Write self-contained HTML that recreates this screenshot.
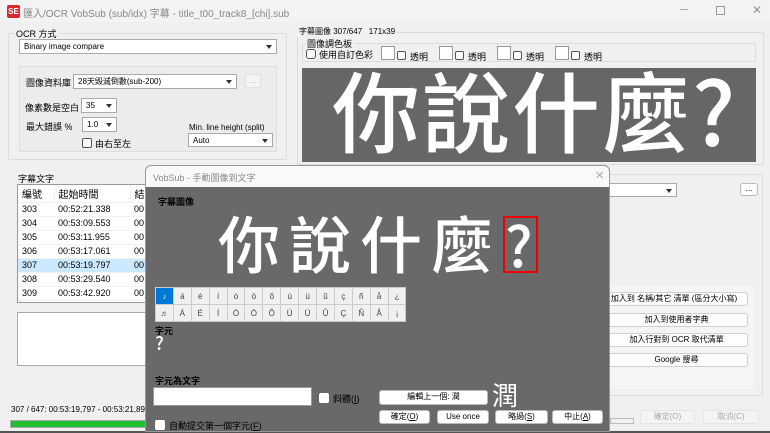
<!DOCTYPE html>
<html><head><meta charset="utf-8">
<style>
*{box-sizing:border-box;margin:0;padding:0}
body{width:770px;height:433px;overflow:hidden;background:#f0f0f0;font-family:"Liberation Sans","Noto Sans CJK TC",sans-serif;font-size:9px;color:#000;position:relative}
.a{position:absolute}
.grp{position:absolute;border:1px solid #dcdcdc;border-radius:2px}
.lbl{position:absolute;background:#f0f0f0;padding:0 2px;font-size:9px}
.combo{position:absolute;background:#fff;border:1px solid #aaa;font-size:8px;padding:2px 4px;line-height:10px}
.combo:after{content:"";position:absolute;right:4px;top:5px;border:3px solid transparent;border-top:4px solid #333}
.cb{position:absolute;width:10px;height:10px;border:1px solid #555;border-radius:2px;background:#fff}
.btn{position:absolute;background:#fdfdfd;border:1px solid #d0d0d0;border-radius:3px;text-align:center;font-size:8px;line-height:12px}
.dbtn{position:absolute;background:#fff;border:1px solid #bbb;border-radius:3px;text-align:center;font-size:8px;line-height:12px}
.big{font-family:"Noto Sans CJK TC",sans-serif;color:#fff;font-weight:500;white-space:nowrap;line-height:1}
table{border-collapse:collapse}
.grid td{width:17.9px;height:17px;border:1px solid #ccc;background:#f0f0f0;text-align:center;font-size:8px;color:#444}
.lv td{height:14px;font-size:9px;padding-left:4px;border-bottom:1px solid #f2f2f2}
</style></head><body>
<div class="a" style="left:0;top:0;width:770px;height:22px;background:#f3f3f3"></div>
<div class="a" style="left:7px;top:5px;width:13px;height:13px;background:#d9292f;border-radius:2px;color:#fff;font-size:8px;font-weight:bold;line-height:13px;text-align:center">SE</div>
<div class="a" style="left:23px;top:5px;font-size:10px;color:#888">匯入/OCR VobSub (sub/idx) 字幕 - title_t00_track8_[chi].sub</div>
<div class="a" style="left:680px;top:4px;font-size:11px;color:#999">─</div>
<div class="a" style="left:716px;top:6px;width:9px;height:9px;border:1px solid #999"></div>
<div class="a" style="left:752px;top:3px;font-size:12px;color:#999">✕</div>

<div class="grp" style="left:8px;top:33px;width:279px;height:127px"></div>
<div class="lbl" style="left:14px;top:27px">OCR 方式</div>
<div class="combo" style="left:19px;top:39px;width:258px;height:15px">Binary image compare</div>
<div class="a" style="left:19px;top:66px;width:258px;height:86px;background:#ececec;border:1px solid #ddd"></div>
<div class="a" style="left:26px;top:76px">圖像資料庫</div>
<div class="combo" style="left:73px;top:74px;width:164px;height:15px">28天毀滅倒數(sub-200)</div>
<div class="a" style="left:245px;top:74px;width:16px;height:14px;border:1px solid #e0e0e0;border-radius:2px;background:#f4f4f4;color:#aaa;text-align:center;font-size:8px;line-height:12px">...</div>
<div class="a" style="left:25px;top:101px">像素數是空白</div>
<div class="combo" style="left:81px;top:98px;width:36px;height:15px">35</div>
<div class="a" style="left:26px;top:120px">最大錯誤 %</div>
<div class="combo" style="left:82px;top:117px;width:35px;height:15px">1.0</div>
<div class="cb" style="left:82px;top:138px"></div>
<div class="a" style="left:95px;top:137px">由右至左</div>
<div class="a" style="left:189px;top:123px;font-size:8px">Min. line height (split)</div>
<div class="combo" style="left:188px;top:133px;width:85px;height:14px">Auto</div>

<div class="grp" style="left:297px;top:32px;width:467px;height:133px"></div>
<div class="lbl" style="left:297px;top:26px;font-size:8px">字幕圖像 307/647&nbsp;&nbsp; 171x39</div>
<div class="grp" style="left:302px;top:43px;width:454px;height:19px"></div>
<div class="lbl" style="left:305px;top:37px">圖像調色板</div>
<div class="cb" style="left:306px;top:49px;border-radius:3px"></div>
<div class="a" style="left:319px;top:48px">使用自訂色彩</div>
<div class="a" style="left:381px;top:46px;width:14px;height:14px;border:1px solid #999;background:#fff"></div><div class="cb" style="left:397px;top:51px;width:9px;height:9px"></div><div class="a" style="left:410px;top:50px">透明</div>
<div class="a" style="left:439px;top:46px;width:14px;height:14px;border:1px solid #999;background:#fff"></div><div class="cb" style="left:455px;top:51px;width:9px;height:9px"></div><div class="a" style="left:468px;top:50px">透明</div>
<div class="a" style="left:497px;top:46px;width:14px;height:14px;border:1px solid #999;background:#fff"></div><div class="cb" style="left:513px;top:51px;width:9px;height:9px"></div><div class="a" style="left:526px;top:50px">透明</div>
<div class="a" style="left:555px;top:46px;width:14px;height:14px;border:1px solid #999;background:#fff"></div><div class="cb" style="left:571px;top:51px;width:9px;height:9px"></div><div class="a" style="left:584px;top:50px">透明</div>
<div class="a" style="left:302px;top:68px;width:454px;height:94px;background:#666;overflow:hidden">
 <div class="a big" style="left:30px;top:-3px;font-size:88px;letter-spacing:2px">你說什麼?</div>
</div>

<div class="a" style="left:18px;top:172px">字幕文字</div>
<div class="a" style="left:17px;top:184px;width:140px;height:119px;background:#fff;border:1px solid #999;overflow:hidden">
<table class="lv">
<tr><td style="width:36px;font-size:10px;height:17px">編號</td><td style="width:76px;font-size:10px;border-left:1px solid #eee">起始時間</td><td style="font-size:10px;border-left:1px solid #eee">結</td></tr>
<tr><td>303</td><td>00:52:21.338</td><td>00</td></tr>
<tr><td>304</td><td>00:53:09.553</td><td>00</td></tr>
<tr><td>305</td><td>00:53:11.955</td><td>00</td></tr>
<tr><td>306</td><td>00:53:17.061</td><td>00</td></tr>
<tr style="background:#cce8ff"><td>307</td><td>00:53:19.797</td><td>00</td></tr>
<tr><td>308</td><td>00:53:29.540</td><td>00</td></tr>
<tr><td>309</td><td>00:53:42.920</td><td>00</td></tr>
</table></div>
<div class="a" style="left:17px;top:312px;width:140px;height:54px;background:#fff;border:1px solid #aaa"></div>
<div class="a" style="left:11px;top:405px;font-size:8px">307 / 647: 00:53:19,797 - 00:53:21,89</div>
<div class="a" style="left:10px;top:420px;width:140px;height:8px;background:#1fbd2f;border:1px solid #aaa"></div>

<div class="grp" style="left:600px;top:174px;width:163px;height:222px"></div>
<div class="combo" style="left:600px;top:183px;width:77px;height:14px"></div>
<div class="a" style="left:740px;top:183px;width:18px;height:13px;border:1px solid #bbb;border-radius:3px;background:#fff;text-align:center;font-size:8px;line-height:9px">...</div>
<div class="a" style="left:603px;top:286px;width:151px;height:103px;background:#f5f5f5"></div>
<div class="btn" style="left:600px;top:292px;width:148px;height:14px">加入到 名稱/其它 清單 (區分大小寫)</div>
<div class="btn" style="left:605px;top:313px;width:143px;height:14px">加入到使用者字典</div>
<div class="btn" style="left:605px;top:333px;width:143px;height:14px">加入行對到 OCR 取代清單</div>
<div class="btn" style="left:605px;top:353px;width:143px;height:14px">Google 搜尋</div>
<div class="a" style="left:610px;top:418px;width:24px;height:6px;border:1px solid #bbb"></div>
<div class="btn" style="left:640px;top:410px;width:55px;height:14px;color:#aaa;background:#f4f4f4;border-color:#e4e4e4">確定(O)</div>
<div class="btn" style="left:703px;top:410px;width:56px;height:14px;color:#aaa;background:#f4f4f4;border-color:#e4e4e4">取消(C)</div>
<div class="a" style="left:0;top:431px;width:770px;height:2px;background:#555"></div>

<div class="a" style="left:145px;top:165px;width:465px;height:267px;background:#696969;border:1px solid #999;border-radius:6px 6px 0 0;overflow:hidden">
 <div class="a" style="left:0;top:0;width:465px;height:21px;background:#f9f9f9"></div>
 <div class="a" style="left:7px;top:5px;font-size:9px;color:#888">VobSub - 手動圖像到文字</div>
 <div class="a" style="left:449px;top:3px;font-size:11px;color:#aaa">✕</div>
 <div class="a" style="left:12px;top:29px;font-weight:bold;color:#000;font-size:9px">字幕圖像</div>
 <div class="a big" style="left:72px;top:44px;font-size:62px;letter-spacing:9px">你說什麼</div>
 <div class="a big" style="left:359px;top:50px;font-size:56px">?</div>
 <div class="a" style="left:357px;top:50px;width:35px;height:57px;border:2px solid #e00"></div>
 <table class="grid a" style="left:9px;top:121px">
 <tr><td style="background:#0078d7;color:#fff">♪</td><td>á</td><td>é</td><td>í</td><td>ó</td><td>ö</td><td>õ</td><td>ú</td><td>ü</td><td>ũ</td><td>ç</td><td>ñ</td><td>å</td><td>¿</td></tr>
 <tr><td>♬</td><td>Á</td><td>É</td><td>Í</td><td>Ó</td><td>Ö</td><td>Õ</td><td>Ú</td><td>Ü</td><td>Ũ</td><td>Ç</td><td>Ñ</td><td>Å</td><td>¡</td></tr>
 </table>
 <div class="a" style="left:9px;top:158px;font-weight:bold;color:#000">字元</div>
 <div class="a big" style="left:9px;top:168px;font-size:18px">?</div>
 <div class="a" style="left:9px;top:208px;font-weight:bold;color:#000">字元為文字</div>
 <div class="a" style="left:7px;top:221px;width:159px;height:19px;background:#fff;border:1px solid #999"></div>
 <div class="cb" style="left:173px;top:227px;border:none"></div>
 <div class="a" style="left:187px;top:226px;color:#000">斜體(<u>I</u>)</div>
 <div class="dbtn" style="left:233px;top:224px;width:109px;height:15px">編輯上一個: 潤</div>
 <div class="a big" style="left:346px;top:216px;font-size:26px;font-weight:normal">潤</div>
 <div class="cb" style="left:9px;top:254px;border:none"></div>
 <div class="a" style="left:23px;top:253px;color:#000">自動提交第一個字元(<u>F</u>)</div>
 <div class="dbtn" style="left:233px;top:244px;width:51px;height:14px">確定(<u>O</u>)</div>
 <div class="dbtn" style="left:291px;top:244px;width:52px;height:14px">Use once</div>
 <div class="dbtn" style="left:349px;top:244px;width:53px;height:14px">略過(<u>S</u>)</div>
 <div class="dbtn" style="left:406px;top:244px;width:51px;height:14px">中止(<u>A</u>)</div>
</div>
</body></html>
